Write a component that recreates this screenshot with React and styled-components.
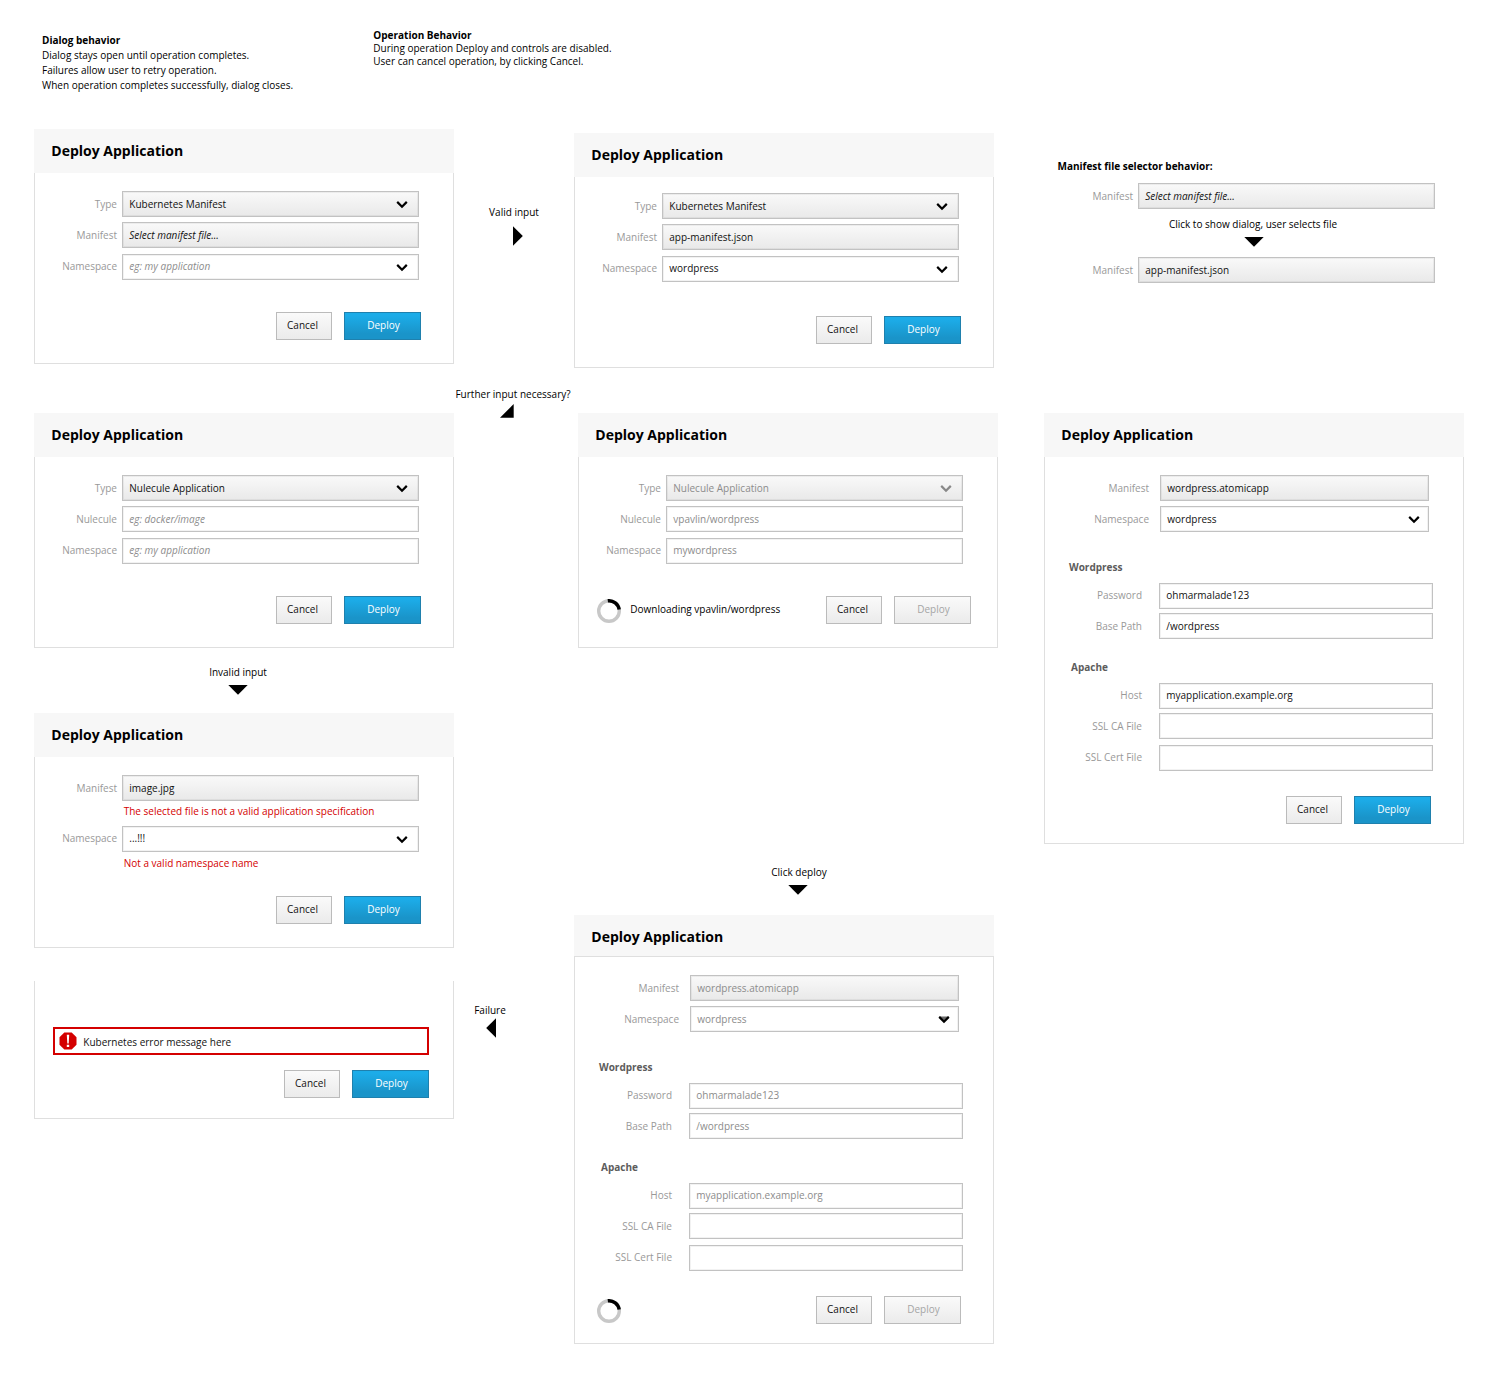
import React from 'react';
import styled, { createGlobalStyle, css } from 'styled-components';

const Global = createGlobalStyle`
  *, *::before, *::after { box-sizing: border-box; }
  body { margin: 0; background: #fff; color: #000; font-family: "Open Sans", "Noto Sans", sans-serif; font-size: 10px; line-height: 14px; }
  h2, h3, p { margin: 0; font: inherit; }
`;

const Page = styled.main`width: 1500px; height: 1400px; overflow: hidden;`;
const Notes = styled.header`display: flex; height: 129px; padding-left: 42px;`;
const Note = styled.section`
  width: ${p => p.$width}px;
  padding-top: ${p => p.$top}px;
  line-height: ${p => p.$line}px;
  white-space: nowrap;
`;
const Strong = styled.h3`&& { font-weight: 700; }`;
const Board = styled.div`display: flex; align-items: flex-start; padding-left: 34px;`;
const Column = styled.div`
  display: flex; flex-direction: column; flex: none;
  width: ${p => p.$width}px;
  padding-top: ${p => p.$top || 0}px;
  margin-right: ${p => p.$after || 0}px;
`;
const Dialog = styled.section`
  display: flex; flex-direction: column; flex: none;
  width: 420px;
  height: ${p => p.$height}px;
  margin-top: ${p => p.$before || 0}px;
  margin-left: ${p => p.$shift || 0}px;
`;
const Title = styled.h2`
  && {
    height: ${p => p.$height || 44}px;
    padding: 12px 17.3px 0;
    background: #f7f7f7;
    font-size: 14px; line-height: 19px; font-weight: 700;
  }
`;
const Body = styled.div`
  flex: 1; display: flex; flex-direction: column;
  border: 1px solid #dfdfdf;
  border-top-width: ${p => (p.$topLine ? 1 : 0)}px;
  padding-top: ${p => p.$top}px;
`;
const Row = styled.div`
  display: flex; flex: none; height: 26px;
  margin-top: ${p => p.$gap ?? 5}px;
`;
const Label = styled.span`
  width: ${p => p.$width}px;
  margin-right: ${p => p.$gap}px;
  padding-top: ${p => p.$top}px;
  text-align: right; color: #999; white-space: nowrap;
`;
const Box = styled.div`
  display: flex; justify-content: space-between; flex: none;
  width: ${p => p.$width}px; height: 26px;
  padding: ${p => p.$textTop - 1}px ${p => p.$endPad}px 0 6.3px;
  border: 1px solid #c2c2c2;
  box-shadow: inset 0 0 0 1px rgba(0, 0, 0, 0.05);
  background: ${p => (p.$solid ? 'linear-gradient(#f9f9f9, #e9e9e9)' : '#fff')};
  color: ${p => (p.$muted ? '#8c8c8c' : '#111')};
  font-style: ${p => (p.$italic ? 'italic' : 'normal')};
  white-space: nowrap;
`;
const Section = styled.h3`
  && {
    height: 14px; flex: none; font-weight: 700; color: #5c5c5c;
    margin: ${p => p.$before}px 0 0 ${p => p.$left}px;
  }
`;
const FieldError = styled.p`
  && { height: 14px; flex: none; margin: ${p => p.$before}px 0 0 88.7px; color: #d40000; }
`;
const Footer = styled.div`
  display: flex; flex: none; height: 28px;
  margin: auto ${p => p.$right}px ${p => p.$bottom}px ${p => p.$left}px;
`;
const buttonKinds = {
  plain: css`border-color: #bbb; background: linear-gradient(#fafafa, #ebebeb); color: #111; padding: 0 3px 2px 0;`,
  primary: css`border-color: #1f80ad; background: linear-gradient(#1cace8 10%, #1a94c9 80%); color: #fff; padding: 0 0 2px 2px;`,
  disabled: css`border-color: #bbb; background: linear-gradient(#fafafa, #ebebeb); color: #a5a5a5; padding: 0 0 2px 2px;`,
};
const Button = styled.button`
  flex: none; height: 28px; margin: 0 0 0 12px;
  width: ${p => p.$width}px;
  border: 1px solid; border-radius: 0;
  font: inherit; text-align: center;
  ${p => buttonKinds[p.$kind]}
`;
const Status = styled.div`display: flex; margin-right: auto; padding-top: 3px; gap: 9.3px;`;
const StatusText = styled.span`padding-top: 3px;`;
const Step = styled.div`
  display: flex; flex-direction: column; align-items: center; flex: none;
  width: ${p => p.$width}px; height: 34px;
  margin-top: ${p => p.$before}px;
  margin-left: ${p => p.$left || 0}px;
  white-space: nowrap;
`;
const ArrowSvg = styled.svg`display: block; flex: none; margin-top: ${p => p.$top}px; margin-left: ${p => p.$left || 0}px;`;
const Alert = styled.div`
  display: flex; flex: none; width: 376px; height: 28px;
  margin: 46px 0 0 18px; padding: 3px 0 0 4px; gap: 6.3px;
  border: 2px solid #d40000;
`;
const AlertText = styled.span`padding-top: 3px; color: #111;`;
const Chevron = styled.svg`display: block; flex: none; margin-top: ${p => p.$top}px;`;
const Icon = styled.svg`display: block; flex: none;`;

const arrows = {
  down: [20, 10, 'M0.3 0H19.7L10 9.8Z'],
  right: [10, 20, 'M0 0.3L9.8 10L0 19.7Z'],
  left: [10, 20, 'M10 0.3L0.2 10L10 19.7Z'],
  corner: [14, 14, 'M13.7 0V13.7H0Z'],
};
function Arrow({ kind, top, left }) {
  const [w, h, d] = arrows[kind];
  return <ArrowSvg $top={top} $left={left} width={w} height={h}><path d={d} /></ArrowSvg>;
}

function Field({ label, labelWidth = 82, labelGap = 5, textTop = 6, width = 297, gap, text, solid, muted, italic, chevron, chevronTop = 4, endPad = 9.8, filled }) {
  const stroke = muted && !filled && !italic ? '#888' : '#000';
  return (
    <Row $gap={gap}>
      <Label $width={labelWidth} $gap={labelGap} $top={textTop}>{label}</Label>
      <Box $width={width} $solid={solid} $muted={muted} $italic={italic} $textTop={textTop} $endPad={endPad}>
        <span>{text}</span>
        {chevron && (
          <Chevron $top={chevronTop} width="12" height="8">
            {filled && <path d="M1 0.5H11L6 6Z" fill="#6a6a6a" />}
            <path d="M1.2 0.9L6 5.7L10.8 0.9" fill="none" stroke={stroke} strokeWidth="2.2" />
          </Chevron>
        )}
      </Box>
    </Row>
  );
}

function Spinner() {
  return (
    <Icon width="24" height="24" viewBox="0 0 24 24" fill="none" strokeWidth="3.4">
      <circle cx="12" cy="12" r="10.3" stroke="#c8c8c8" />
      <path d="M10.8 1.8A10.3 10.3 0 0 1 22.2 10.6" stroke="#000" />
    </Icon>
  );
}

function Actions({ right = 32, bottom = 23, left = 22, busy, status }) {
  return (
    <Footer $right={right} $bottom={bottom} $left={left}>
      <Status>{busy && <Spinner />}{status && <StatusText>{status}</StatusText>}</Status>
      <Button $kind="plain" $width={56}>Cancel</Button>
      <Button $kind={busy ? 'disabled' : 'primary'} $width={77}>Deploy</Button>
    </Footer>
  );
}

function AtomicForm({ busy }) {
  const head = { labelWidth: 104, labelGap: 11, width: 269, muted: busy };
  const sub = { labelWidth: 97, labelGap: 17, width: 274, muted: busy };
  return (
    <>
      <Field {...head} gap={0} label="Manifest" text="wordpress.atomicapp" solid />
      <Field {...head} label="Namespace" text="wordpress" chevron endPad={7.6} filled={busy} />
      <Section $before={28} $left={24}>Wordpress</Section>
      <Field {...sub} gap={9} label="Password" text="ohmarmalade123" textTop={5} />
      <Field {...sub} gap={4} label="Base Path" text="/wordpress" />
      <Section $before={21} $left={26}>Apache</Section>
      <Field {...sub} gap={9} label="Host" text="myapplication.example.org" textTop={5} />
      <Field {...sub} gap={4} label="SSL CA File" />
      <Field {...sub} gap={6} label="SSL Cert File" textTop={5} />
    </>
  );
}

export default function App() {
  return (
    <Page>
      <Global />
      <Notes>
        <Note $width={331.3} $top={33} $line={15}>
          <Strong>Dialog behavior</Strong>
          <p>Dialog stays open until operation completes.</p>
          <p>Failures allow user to retry operation.</p>
          <p>When operation completes successfully, dialog closes.</p>
        </Note>
        <Note $width={300} $top={29.4} $line={12.6}>
          <Strong>Operation Behavior</Strong>
          <p>During operation Deploy and controls are disabled.</p>
          <p>User can cancel operation, by clicking Cancel.</p>
        </Note>
      </Notes>
      <Board>
        <Column $width={420}>
          <Dialog $height={235}>
            <Title>Deploy Application</Title>
            <Body $top={18}>
              <Field gap={0} label="Type" text="Kubernetes Manifest" solid chevron />
              <Field label="Manifest" text="Select manifest file..." italic solid />
              <Field gap={6} label="Namespace" text="eg: my application" textTop={5} italic muted chevron chevronTop={5} />
              <Actions />
            </Body>
          </Dialog>
          <Dialog $height={235} $before={49}>
            <Title>Deploy Application</Title>
            <Body $top={18}>
              <Field gap={0} label="Type" text="Nulecule Application" solid chevron />
              <Field label="Nulecule" text="eg: docker/image" italic muted />
              <Field gap={6} label="Namespace" text="eg: my application" textTop={5} italic muted />
              <Actions />
            </Body>
          </Dialog>
          <Step $width={60} $before={17} $left={174}>Invalid input<Arrow kind="down" top={6} /></Step>
          <Dialog $height={235} $before={14}>
            <Title>Deploy Application</Title>
            <Body $top={18}>
              <Field gap={0} label="Manifest" text="image.jpg" solid />
              <FieldError $before={3}>The selected file is not a valid application specification</FieldError>
              <Field gap={8} label="Namespace" text="...!!!" textTop={5} chevron chevronTop={5} />
              <FieldError $before={4}>Not a valid namespace name</FieldError>
              <Actions />
            </Body>
          </Dialog>
          <Dialog $height={138} $before={33}>
            <Body $top={0}>
              <Alert>
                <Icon width="18" height="18" viewBox="0 0 18 18">
                  <path d="M5.3 0.5H12.7L17.5 5.3V12.7L12.7 17.5H5.3L0.5 12.7V5.3Z" fill="#d40000" />
                  <path d="M7.8 2.8H10.2L9.7 11.6H8.3ZM7.8 12.8H10.2V15H7.8Z" fill="#fff" />
                </Icon>
                <AlertText>Kubernetes error message here</AlertText>
              </Alert>
              <Actions right={24} bottom={20} />
            </Body>
          </Dialog>
        </Column>

        <Column $width={120}>
          <Step $width={60} $before={76} $left={30}>Valid input<Arrow kind="right" top={7} left={8} /></Step>
          <Step $width={118} $before={148}>Further input necessary?<Arrow kind="corner" top={3} left={-12} /></Step>
          <Step $width={40} $before={582} $left={16}>Failure<Arrow kind="left" top={1} left={2} /></Step>
        </Column>

        <Column $width={424} $top={4} $after={46}>
          <Dialog $height={235}>
            <Title>Deploy Application</Title>
            <Body $top={16}>
              <Field gap={0} label="Type" text="Kubernetes Manifest" solid chevron />
              <Field label="Manifest" text="app-manifest.json" solid />
              <Field gap={6} label="Namespace" text="wordpress" textTop={5} chevron chevronTop={5} />
              <Actions />
            </Body>
          </Dialog>
          <Dialog $height={235} $before={45} $shift={4}>
            <Title>Deploy Application</Title>
            <Body $top={18}>
              <Field gap={0} label="Type" text="Nulecule Application" solid muted chevron />
              <Field label="Nulecule" text="vpavlin/wordpress" muted />
              <Field gap={6} label="Namespace" text="mywordpress" textTop={5} muted />
              <Actions left={18} right={26} busy status="Downloading vpavlin/wordpress" />
            </Body>
          </Dialog>
          <Step $width={60} $before={217} $left={195}>Click deploy<Arrow kind="down" top={6} left={-2} /></Step>
          <Dialog $height={429} $before={16}>
            <Title $height={41}>Deploy Application</Title>
            <Body $top={18} $topLine>
              <AtomicForm busy />
              <Actions bottom={19} busy />
            </Body>
          </Dialog>
        </Column>

        <Column $width={420} $top={30}>
          <Step $width={180} $left={1}><Strong>Manifest file selector behavior:</Strong></Step>
          <Field gap={-10} labelWidth={89} label="Manifest" text="Select manifest file..." italic solid />
          <Step $width={200} $before={8} $left={109}>Click to show dialog, user selects file<Arrow kind="down" top={6} left={2} /></Step>
          <Field gap={6} labelWidth={89} label="Manifest" text="app-manifest.json" solid />
          <Dialog $height={431} $before={130}>
            <Title>Deploy Application</Title>
            <Body $top={18}>
              <AtomicForm />
              <Actions bottom={19} />
            </Body>
          </Dialog>
        </Column>
      </Board>
    </Page>
  );
}
